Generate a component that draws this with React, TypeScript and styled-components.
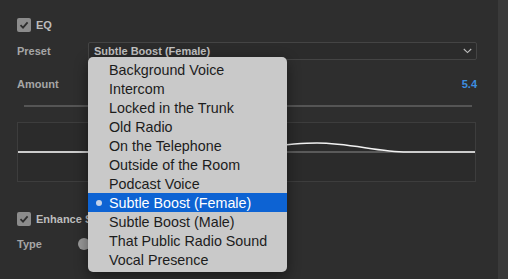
import styled, { createGlobalStyle } from 'styled-components';

const presets = [
  'Background Voice',
  'Intercom',
  'Locked in the Trunk',
  'Old Radio',
  'On the Telephone',
  'Outside of the Room',
  'Podcast Voice',
  'Subtle Boost (Female)',
  'Subtle Boost (Male)',
  'That Public Radio Sound',
  'Vocal Presence',
];

const selected = 'Subtle Boost (Female)';

const GlobalStyle = createGlobalStyle`
  html, body {
    margin: 0;
    padding: 0;
    background: #2e2e2e;
  }
  body {
    font-family: 'Liberation Sans', Arial, sans-serif;
  }
`;

const Page = styled.div`
  display: flex;
  width: 508px;
  height: 279px;
  overflow: hidden;
  background: #2e2e2e;
`;

const Panel = styled.div`
  position: relative;
  flex: 1;
  display: flex;
  flex-direction: column;
  padding: 18px 21px 0 17px;
`;

const Scrollbar = styled.div`
  width: 10px;
  background: #3a3a3a;
`;

const CheckRow = styled.div<{ $top?: number }>`
  display: flex;
  align-items: center;
  gap: 5px;
  height: 14px;
  margin-top: ${({ $top }) => $top ?? 0}px;
`;

const Checkbox = styled.div`
  width: 14px;
  height: 14px;
  border-radius: 2px;
  background: #8c8c8c;
  display: flex;
  align-items: center;
  justify-content: center;
`;

const CheckLabel = styled.span`
  font-size: 11px;
  font-weight: 700;
  color: #bdbdbd;
  line-height: 14px;
`;

const FieldRow = styled.div<{ $top: number; $height: number }>`
  display: flex;
  align-items: center;
  height: ${({ $height }) => $height}px;
  margin-top: ${({ $top }) => $top}px;
`;

const FieldLabel = styled.span<{ $width?: number }>`
  width: ${({ $width }) => $width ?? 71}px;
  flex-shrink: 0;
  font-size: 11px;
  font-weight: 700;
  color: #a6a6a6;
`;

const Select = styled.div`
  flex: 1;
  height: 18px;
  box-sizing: border-box;
  border: 1px solid #444444;
  border-radius: 2px;
  background: #2b2b2b;
  display: flex;
  align-items: center;
  justify-content: space-between;
  padding: 0 4px 0 5px;
`;

const SelectValue = styled.span`
  font-size: 11px;
  font-weight: 700;
  color: #c2c2c2;
`;

const Value = styled.span`
  margin-left: auto;
  font-size: 11px;
  font-weight: 700;
  color: #3d8fe0;
`;

const SliderTrack = styled.div`
  height: 2px;
  margin: 13px 5px 0 7px;
  background: #555555;
`;

const Graph = styled.div`
  margin: 15px 1px 0 0;
  height: 60px;
  box-sizing: border-box;
  border: 1px solid #3d3d3d;
  background: #2b2b2b;

  svg {
    display: block;
  }
`;

const Radio = styled.span`
  width: 12px;
  height: 12px;
  border-radius: 50%;
  background: #9a9a9a;
`;

const Menu = styled.ul`
  position: absolute;
  left: 88px;
  top: 57px;
  width: 199px;
  margin: 0;
  padding: 3px 0;
  list-style: none;
  box-sizing: border-box;
  background: #c9c9c9;
  border-radius: 5px;
  box-shadow: 0 4px 14px rgba(0, 0, 0, 0.45);
`;

const MenuItem = styled.li<{ $active?: boolean }>`
  display: flex;
  align-items: center;
  height: 19px;
  font-size: 14.3px;
  color: ${({ $active }) => ($active ? '#ffffff' : '#1c1c1c')};
  background: ${({ $active }) => ($active ? '#0d63d3' : 'transparent')};
  white-space: nowrap;
`;

const Mark = styled.span`
  width: 21px;
  display: flex;
  justify-content: center;
`;

const Dot = styled.span`
  width: 6px;
  height: 6px;
  border-radius: 50%;
  background: #c4d3ea;
`;

function CheckIcon() {
  return (
    <svg width="10" height="10" viewBox="0 0 10 10">
      <path d="M1.5 5.2 L4 7.6 L8.6 2.4" fill="none" stroke="#2e2e2e" strokeWidth="1.8" />
    </svg>
  );
}

function Chevron() {
  return (
    <svg width="9" height="6" viewBox="0 0 9 6">
      <path d="M0.8 1 L4.5 4.6 L8.2 1" fill="none" stroke="#bdbdbd" strokeWidth="1.1" />
    </svg>
  );
}

function EqCurve() {
  return (
    <svg width="457" height="58" viewBox="0 0 457 58">
      <line x1="0" y1="29" x2="457" y2="29" stroke="#8a8a8a" strokeWidth="1" />
      <path
        d="M0 29 L180 29 C222 29 262 20 299 20 C332 20 360 29 389 29 L457 29"
        fill="none"
        stroke="#f2f2f2"
        strokeWidth="1.6"
      />
    </svg>
  );
}

export default function App() {
  return (
    <Page>
      <GlobalStyle />
      <Panel>
        <CheckRow>
          <Checkbox>
            <CheckIcon />
          </Checkbox>
          <CheckLabel>EQ</CheckLabel>
        </CheckRow>
        <FieldRow $top={10} $height={18}>
          <FieldLabel>Preset</FieldLabel>
          <Select>
            <SelectValue>{selected}</SelectValue>
            <Chevron />
          </Select>
        </FieldRow>
        <FieldRow $top={16} $height={16}>
          <FieldLabel>Amount</FieldLabel>
          <Value>5.4</Value>
        </FieldRow>
        <SliderTrack />
        <Graph>
          <EqCurve />
        </Graph>
        <CheckRow $top={30}>
          <Checkbox>
            <CheckIcon />
          </Checkbox>
          <CheckLabel>Enhance Speech</CheckLabel>
        </CheckRow>
        <FieldRow $top={11} $height={14}>
          <FieldLabel $width={61}>Type</FieldLabel>
          <Radio />
        </FieldRow>

        <Menu>
          {presets.map((p) => (
            <MenuItem key={p} $active={p === selected}>
              <Mark>{p === selected && <Dot />}</Mark>
              {p}
            </MenuItem>
          ))}
        </Menu>
      </Panel>
      <Scrollbar />
    </Page>
  );
}
